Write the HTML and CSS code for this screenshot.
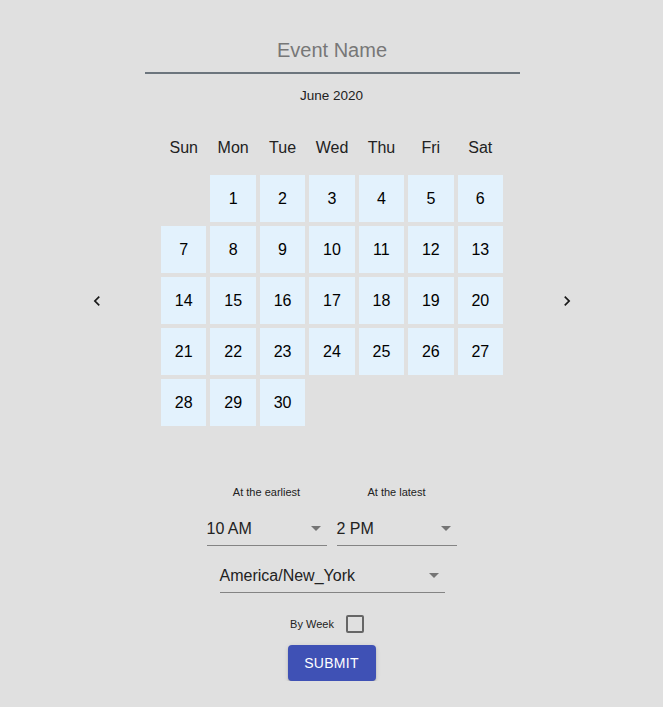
FILE: index.html
```html
<!DOCTYPE html>
<html lang="en">
<head>
<meta charset="utf-8">
<title>New Event</title>
<link rel="stylesheet" href="styles.css">
</head>
<body>
<main class="page">
  <input class="event-name" type="text" placeholder="Event Name">
  <div class="month">June 2020</div>
  <div class="weekdays">
    <span>Sun</span><span>Mon</span><span>Tue</span><span>Wed</span><span>Thu</span><span>Fri</span><span>Sat</span>
  </div>
  <div class="cal-row">
    <button class="nav" aria-label="Previous month">
      <svg viewBox="0 0 24 24" width="20" height="20"><path d="M15.41 7.41L14 6l-6 6 6 6 1.41-1.41L10.83 12z"/></svg>
    </button>
    <div class="days">
      <span class="empty"></span>
      <span class="day">1</span><span class="day">2</span><span class="day">3</span><span class="day">4</span><span class="day">5</span><span class="day">6</span>
      <span class="day">7</span><span class="day">8</span><span class="day">9</span><span class="day">10</span><span class="day">11</span><span class="day">12</span><span class="day">13</span>
      <span class="day">14</span><span class="day">15</span><span class="day">16</span><span class="day">17</span><span class="day">18</span><span class="day">19</span><span class="day">20</span>
      <span class="day">21</span><span class="day">22</span><span class="day">23</span><span class="day">24</span><span class="day">25</span><span class="day">26</span><span class="day">27</span>
      <span class="day">28</span><span class="day">29</span><span class="day">30</span>
    </div>
    <button class="nav" aria-label="Next month">
      <svg viewBox="0 0 24 24" width="20" height="20"><path d="M10 6L8.59 7.41 13.17 12l-4.58 4.59L10 18l6-6z"/></svg>
    </button>
  </div>
  <div class="times">
    <div class="time-col">
      <div class="label">At the earliest</div>
      <div class="select"><span>10 AM</span><i class="caret"></i></div>
    </div>
    <div class="time-col">
      <div class="label">At the latest</div>
      <div class="select"><span>2 PM</span><i class="caret"></i></div>
    </div>
  </div>
  <div class="select tz"><span>America/New_York</span><i class="caret"></i></div>
  <label class="by-week"><span>By Week</span><span class="checkbox"></span></label>
  <button class="submit">Submit</button>
</main>
</body>
</html>
```
FILE: styles.css
```css
html, body {
  margin: 0;
  padding: 0;
  background: #e0e0e0;
}
body {
  font-family: "Liberation Sans", Arial, Helvetica, sans-serif;
  color: rgba(0, 0, 0, 0.87);
}
.page {
  display: flex;
  flex-direction: column;
  align-items: center;
  padding-top: 32px;
}
.event-name {
  box-sizing: border-box;
  width: 375px;
  height: 42px;
  margin: 0;
  margin-left: 1px;
  padding: 0 0 4px;
  border: none;
  border-bottom: 2px solid #6c757d;
  background: transparent;
  font-family: inherit;
  font-size: 20px;
  text-align: center;
  outline: none;
  color: #333;
}
.event-name::placeholder {
  color: #777;
}
.month {
  margin-top: 14px;
  font-size: 13.5px;
  line-height: 16px;
  color: #222;
}
.weekdays {
  margin-top: 34px;
  width: 342px;
  margin-left: 1px;
  display: grid;
  grid-template-columns: repeat(7, 1fr);
  column-gap: 4px;
  font-size: 16px;
  line-height: 20px;
  text-align: center;
  color: #222;
}
.cal-row {
  margin-top: 17px;
  display: flex;
  align-items: center;
  gap: 54px;
  margin-left: 1px;
}
.nav {
  width: 20px;
  height: 20px;
  padding: 0;
  border: none;
  background: transparent;
  display: flex;
  align-items: center;
  justify-content: center;
  fill: #1a1a1a;
}
.days {
  width: 342px;
  display: grid;
  grid-template-columns: repeat(7, 1fr);
  grid-auto-rows: 47px;
  gap: 4px;
}
.day {
  background: #e3f2fd;
  display: flex;
  align-items: center;
  justify-content: center;
  font-size: 16px;
  color: #000;
}
.times {
  margin-top: 59px;
  display: flex;
  gap: 10px;
}
.time-col {
  width: 120px;
  display: flex;
  flex-direction: column;
  align-items: center;
  gap: 11px;
}
.label {
  font-size: 11px;
  line-height: 14px;
  color: #222;
}
.select {
  box-sizing: border-box;
  width: 100%;
  height: 36px;
  padding-top: 2px;
  border-bottom: 1px solid #848484;
  display: flex;
  align-items: center;
  justify-content: space-between;
  font-size: 16px;
  color: #222;
}
.caret {
  width: 0;
  height: 0;
  margin-right: 6px;
  border-left: 5px solid transparent;
  border-right: 5px solid transparent;
  border-top: 5px solid #757575;
}
.tz {
  width: 225px;
  margin-top: 11px;
  margin-left: 1px;
}
.by-week {
  margin-top: 22px;
  display: flex;
  align-items: center;
  gap: 12px;
  font-size: 11px;
  color: #222;
}
.checkbox {
  box-sizing: border-box;
  width: 18px;
  height: 18px;
  margin-right: 9px;
  border: 2px solid #666;
  border-radius: 2px;
}
.submit {
  margin-top: 12px;
  width: 88px;
  height: 36px;
  padding: 0;
  border: none;
  border-radius: 4px;
  background: #3f51b5;
  color: #fff;
  font-family: inherit;
  font-size: 14px;
  letter-spacing: 0.3px;
  text-transform: uppercase;
  box-shadow: 0 3px 1px -2px rgba(0,0,0,0.2), 0 2px 2px 0 rgba(0,0,0,0.14), 0 1px 5px 0 rgba(0,0,0,0.12);
}
```
